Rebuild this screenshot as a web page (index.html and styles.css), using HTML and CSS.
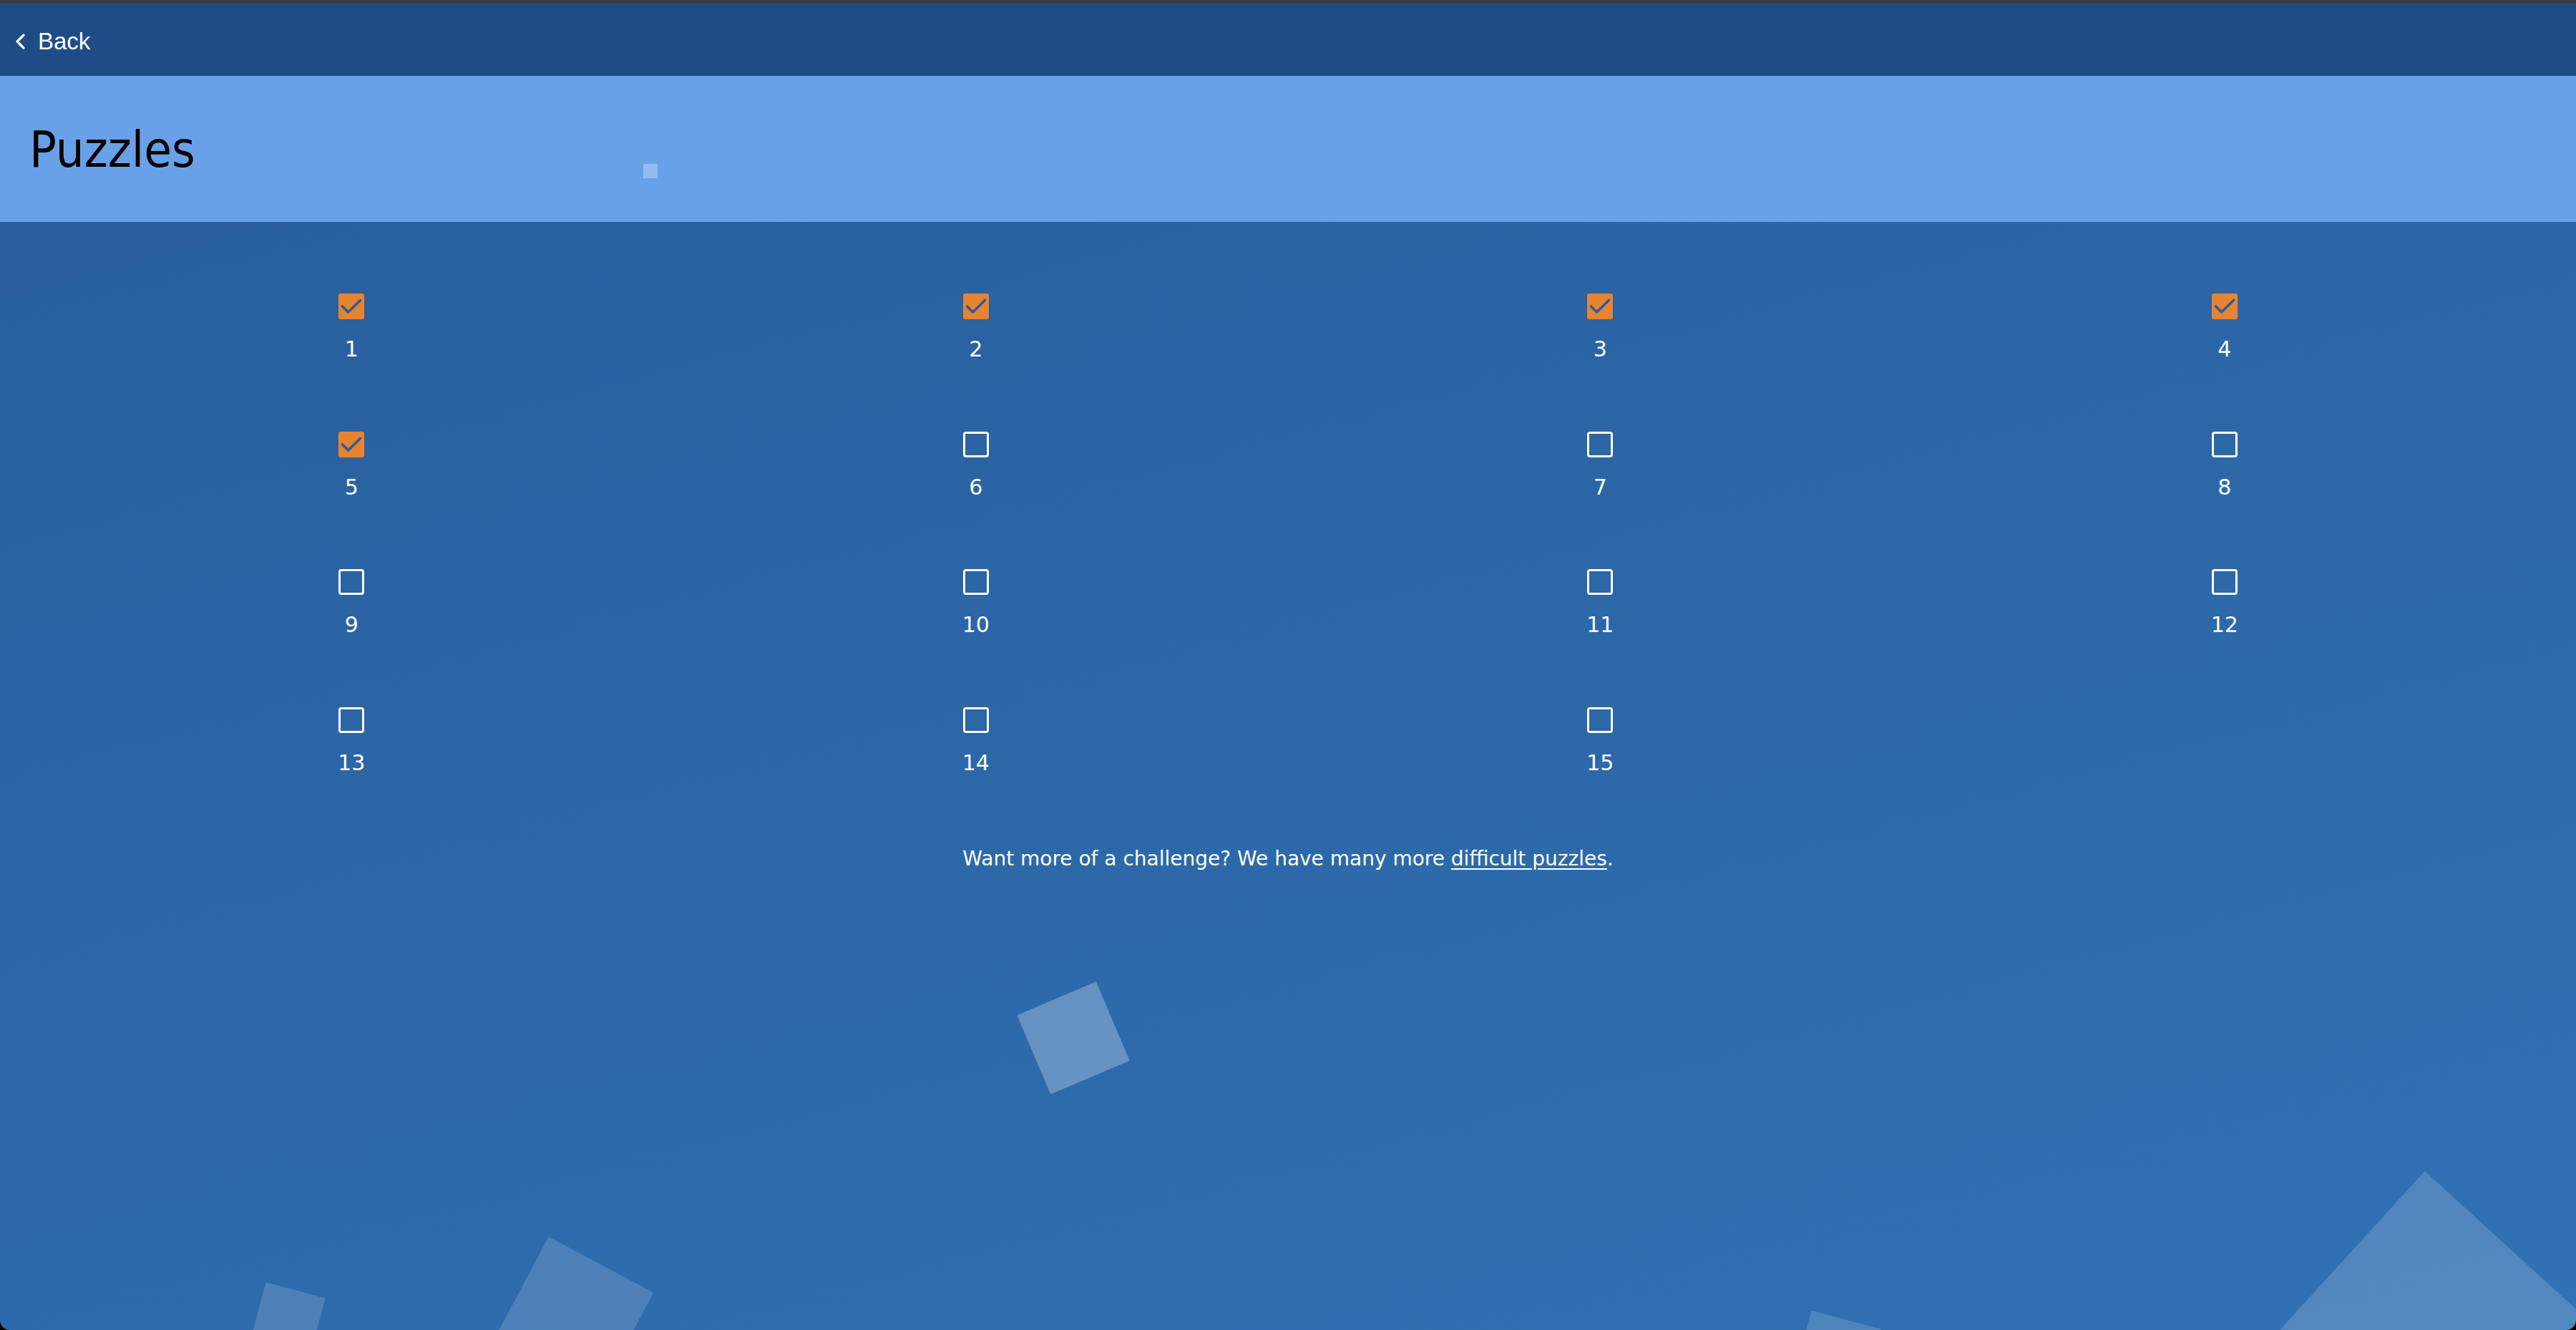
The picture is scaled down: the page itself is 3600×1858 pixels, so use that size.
FILE: index.html
```html
<!DOCTYPE html>
<html lang="en">
<head>
<meta charset="utf-8">
<title>Puzzles</title>
<link rel="stylesheet" href="styles.css">
</head>
<body>
<div class="window">
  <nav class="nav">
    <a class="back" href="#">
      <svg class="chev" width="16" height="24" viewBox="0 0 16 24"><path d="M13 3 L4 12 L13 21" fill="none" stroke="#fff" stroke-width="3.2" stroke-linecap="round" stroke-linejoin="round"/></svg>
      <span>Back</span>
    </a>
  </nav>
  <header class="header">
    <h1 class="title">Puzzles</h1>
    <span class="deco deco-a"></span>
  </header>
  <main class="main">
    <div class="grid">
      <div class="cell"><span class="box checked"><svg viewBox="0 0 36 36"><path d="M5.5 18 L13.5 26 L30.5 9.5" /></svg></span><span class="num">1</span></div>
      <div class="cell"><span class="box checked"><svg viewBox="0 0 36 36"><path d="M5.5 18 L13.5 26 L30.5 9.5" /></svg></span><span class="num">2</span></div>
      <div class="cell"><span class="box checked"><svg viewBox="0 0 36 36"><path d="M5.5 18 L13.5 26 L30.5 9.5" /></svg></span><span class="num">3</span></div>
      <div class="cell"><span class="box checked"><svg viewBox="0 0 36 36"><path d="M5.5 18 L13.5 26 L30.5 9.5" /></svg></span><span class="num">4</span></div>
      <div class="cell"><span class="box checked"><svg viewBox="0 0 36 36"><path d="M5.5 18 L13.5 26 L30.5 9.5" /></svg></span><span class="num">5</span></div>
      <div class="cell"><span class="box"></span><span class="num">6</span></div>
      <div class="cell"><span class="box"></span><span class="num">7</span></div>
      <div class="cell"><span class="box"></span><span class="num">8</span></div>
      <div class="cell"><span class="box"></span><span class="num">9</span></div>
      <div class="cell"><span class="box"></span><span class="num">10</span></div>
      <div class="cell"><span class="box"></span><span class="num">11</span></div>
      <div class="cell"><span class="box"></span><span class="num">12</span></div>
      <div class="cell"><span class="box"></span><span class="num">13</span></div>
      <div class="cell"><span class="box"></span><span class="num">14</span></div>
      <div class="cell"><span class="box"></span><span class="num">15</span></div>
    </div>
    <p class="more">Want more of a challenge? We have many more <a href="#">difficult puzzles</a>.</p>
    <span class="deco deco-b"></span>
    <span class="deco deco-c"></span>
    <span class="deco deco-d"></span>
    <span class="deco deco-e"></span>
    <span class="deco deco-f"></span>
  </main>
</div>
</body>
</html>
```

FILE: styles.css
```css
html, body {
  margin: 0;
  padding: 0;
  background: #000;
}

.window {
  position: relative;
  height: 1858px;
  overflow: hidden;
  display: flex;
  flex-direction: column;
  border-top: 5px solid #3d3d3d;
  box-sizing: border-box;
  border-radius: 0 0 14px 14px;
  font-family: "DejaVu Sans", sans-serif;
  background: linear-gradient(165deg, #285c9b 0%, #2c67a7 50%, #3172b4 100%);
}

.nav {
  height: 101px;
  flex: none;
  background: #1f4c87;
  display: flex;
  align-items: center;
  padding-left: 20px;
}

.back {
  display: flex;
  align-items: center;
  gap: 17px;
  color: #fff;
  text-decoration: none;
  font-family: "Liberation Sans", Arial, sans-serif;
  font-size: 33px;
  padding-top: 4px;
}

.chev {
  display: block;
}

.header {
  position: relative;
  height: 204px;
  flex: none;
  background: #69a1e9;
  display: flex;
  align-items: center;
  padding-left: 41px;
}

.title {
  margin: 0;
  font-family: "DejaVu Sans Condensed", "DejaVu Sans", sans-serif;
  font-stretch: condensed;
  font-weight: normal;
  font-size: 70px;
  color: #000;
  line-height: 1;
  padding-top: 2px;
}

.main {
  position: relative;
  flex: 1;
  padding: 100px 55px 0;
}

.grid {
  display: grid;
  grid-template-columns: repeat(4, 1fr);
  row-gap: 96.5px;
}

.cell {
  display: flex;
  flex-direction: column;
  align-items: center;
}

.box {
  width: 36px;
  height: 36px;
  box-sizing: border-box;
  border: 3px solid #fff;
  border-radius: 4px;
  margin-bottom: 24px;
}

.box.checked {
  background: #e8832f;
  border: none;
  border-radius: 3px;
}

.box svg {
  display: block;
  width: 36px;
  height: 36px;
}

.box svg path {
  fill: none;
  stroke: #2a5e9e;
  stroke-width: 3.6;
  stroke-linecap: round;
  stroke-linejoin: round;
}

.num {
  color: #fff;
  font-size: 30px;
  line-height: 36px;
}

.more {
  margin: 100px 0 0;
  text-align: center;
  color: #fff;
  font-size: 28px;
  line-height: 31px;
}

.more a {
  color: #fff;
  text-decoration: underline;
  text-underline-offset: 4px;
}

.deco {
  position: absolute;
  display: block;
  background: rgba(255, 255, 255, 0.15);
}

.deco-a {
  left: 899px;
  top: 123px;
  width: 20px;
  height: 20px;
  background: rgba(255, 255, 255, 0.28);
}

.deco-b {
  left: 1440px;
  top: 1080px;
  width: 120px;
  height: 120px;
  transform: rotate(-23deg);
  background: rgba(255, 255, 255, 0.27);
}

.deco-c {
  left: 359px;
  top: 1491px;
  width: 86px;
  height: 86px;
  transform: rotate(15deg);
}

.deco-d {
  left: 718px;
  top: 1447px;
  width: 166px;
  height: 166px;
  transform: rotate(28deg);
}

.deco-e {
  left: 3239px;
  top: 1392px;
  width: 320px;
  height: 320px;
  transform: rotate(42.4deg);
  background: rgba(255, 255, 255, 0.16);
}

.deco-f {
  left: 2517px;
  top: 1532px;
  width: 100px;
  height: 100px;
  transform: rotate(15deg);
}
```
